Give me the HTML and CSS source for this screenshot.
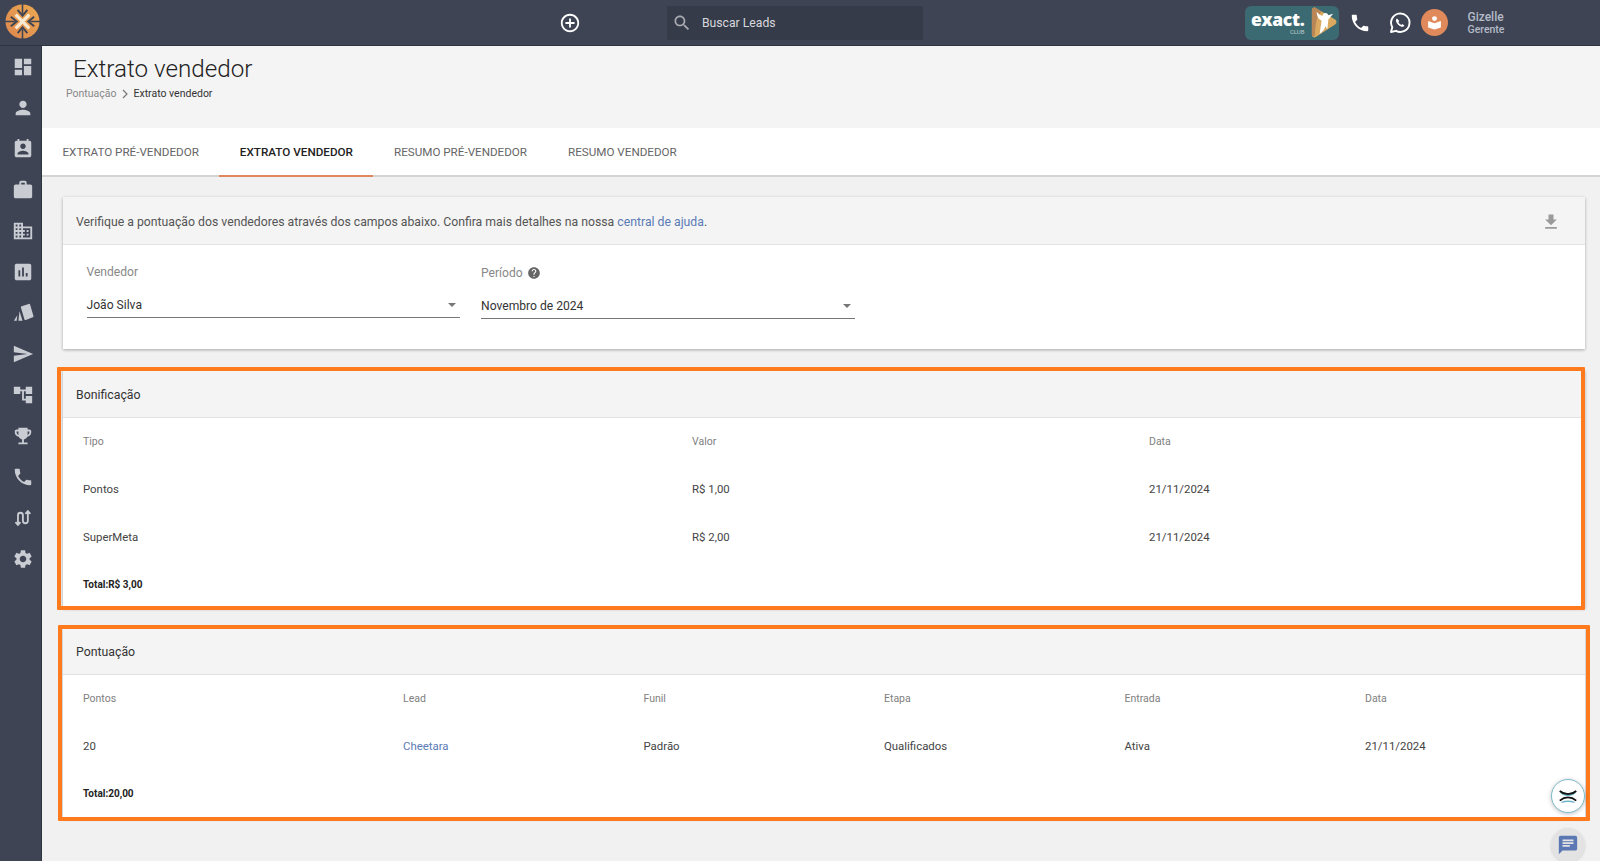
FILE: index.html
```html
<!DOCTYPE html>
<html lang="pt-BR">
<head>
<meta charset="utf-8">
<title>Extrato vendedor</title>
<link rel="stylesheet" href="styles.css">
</head>
<body>
<header class="topbar">
  <div class="logo">
    <svg viewBox="0 0 36 36" width="35" height="35">
      <defs><linearGradient id="lg" x1="0" y1="1" x2="1" y2="0"><stop offset="0" stop-color="#dd8750"/><stop offset="1" stop-color="#eca94f"/></linearGradient></defs>
      <circle cx="18" cy="18" r="17.5" fill="url(#lg)"/>
      <path d="M18 0v10M18 26v10M0 18h10M26 18h10" stroke="#3e4454" stroke-width="1.600"/>
      <path d="M11 11l14 14M25 11L11 25" stroke="#f8ead2" stroke-width="3.200" fill="none"/>
      <path d="M13 6l5 6 5-6M13 30l5-6 5 6M6 13l6 5-6 5M30 13l-6 5 6 5" stroke="#3e4454" stroke-width="2" fill="none"/>
    </svg>
  </div>
  <button class="add-btn" aria-label="Adicionar">
    <svg viewBox="0 0 24 24" width="22" height="22"><path fill="#fff" d="M13 7h-2v4H7v2h4v4h2v-4h4v-2h-4V7zm-1-5C6.480 2 2 6.480 2 12s4.480 10 10 10 10-4.480 10-10S17.520 2 12 2zm0 18c-4.410 0-8-3.590-8-8s3.590-8 8-8 8 3.590 8 8-3.590 8-8 8z"/></svg>
  </button>
  <div class="search">
    <svg viewBox="0 0 24 24" width="20" height="20"><path fill="#a9abb0" d="M15.500 14h-.79l-.28-.27C15.410 12.590 16 11.110 16 9.500 16 5.910 13.090 3 9.500 3S3 5.910 3 9.500 5.910 16 9.500 16c1.610 0 3.090-.59 4.230-1.570l.27.28v.79l5 4.990L20.490 19l-4.990-5zm-6 0C7.010 14 5 11.990 5 9.500S7.010 5 9.500 5 14 7.010 14 9.500 11.990 14 9.500 14z"/></svg>
    <span>Buscar Leads</span>
  </div>
  <div class="club">
    <div class="club-text"><span class="club-name">exact.</span><span class="club-sub">CLUB</span></div>
    <svg viewBox="0 0 30 32" width="29" height="31">
      <path d="M3 3c0-2 2-3 4-2l20 12c2 1 2 4 0 5L7 31c-2 1-4 0-4-2z" fill="#dba95f"/>
      <path d="M3 3c0-2 2-3 4-2l6 4c-4 3-6 8-7 25-2 1-3 0-3-1z" fill="#b98658"/>
      <circle cx="17" cy="9" r="2.800" fill="#fff"/>
      <path d="M8 5c0 5 2 8 5 9l-2 14c3-2 5-5 6-8l2 3 1-10 5-6-7 2h-4C11 9 10 7 8 5z" fill="#fff"/>
    </svg>
  </div>
  <svg class="tb-phone" viewBox="0 0 24 24" width="22" height="22"><path fill="#fff" d="M6.620 10.790c1.440 2.830 3.760 5.140 6.590 6.590l2.200-2.200c.27-.27.67-.36 1.020-.24 1.120.37 2.330.57 3.570.57.55 0 1 .45 1 1V20c0 .55-.45 1-1 1-9.390 0-17-7.610-17-17 0-.55.45-1 1-1h3.500c.55 0 1 .45 1 1 0 1.250.2 2.450.57 3.570.11.35.03.74-.25 1.020l-2.200 2.200z"/></svg>
  <svg class="tb-whats" viewBox="0 0 24 24" width="24" height="24">
    <path d="M3 21l1.300-4.800A9.200 9.200 0 1 1 8 19.800z" fill="none" stroke="#fff" stroke-width="1.900" stroke-linejoin="round"/>
    <path d="M9 7.400c-.9.6-1.300 1.600-.9 3 .8 2.600 2.900 4.600 5.500 5.300 1.300.3 2.300-.2 2.800-1.200l-2.200-1.500-1 .9c-1.300-.6-2.300-1.600-2.800-2.900l.9-1z" fill="#fff"/>
  </svg>
  <div class="book">
    <svg viewBox="0 0 24 24" width="17" height="17"><circle cx="12" cy="6.500" r="3.500" fill="#fff"/><path d="M3 10l9 3 9-3v9l-9 3-9-3z" fill="#fff"/></svg>
  </div>
  <div class="user"><span class="user-name">Gizelle</span><span class="user-role">Gerente</span></div>
</header>

<div class="shell">
  <nav class="sidebar">
    <svg viewBox="0 0 24 24"><path d="M3 13h8V3H3v10zm0 8h8v-6H3v6zm10 0h8V11h-8v10zm0-18v6h8V3h-8z"/></svg>
    <svg viewBox="0 0 24 24"><path d="M12 12c2.210 0 4-1.790 4-4s-1.790-4-4-4-4 1.790-4 4 1.790 4 4 4zm0 2c-2.670 0-8 1.340-8 4v2h16v-2c0-2.660-5.330-4-8-4z"/></svg>
    <svg viewBox="0 0 24 24"><path d="M19 3h-1V1h-2v2H8V1H6v2H5c-1.110 0-2 .9-2 2v14c0 1.100.89 2 2 2h14c1.100 0 2-.9 2-2V5c0-1.100-.9-2-2-2zm-7 3c1.660 0 3 1.340 3 3s-1.340 3-3 3-3-1.340-3-3 1.340-3 3-3zm6 12H6v-1c0-2 4-3.100 6-3.100s6 1.100 6 3.100v1z"/></svg>
    <svg viewBox="0 0 24 24"><path d="M20 6h-4V4c0-1.110-.89-2-2-2h-4c-1.110 0-2 .89-2 2v2H4c-1.110 0-1.990.89-1.990 2L2 19c0 1.110.89 2 2 2h16c1.110 0 2-.89 2-2V8c0-1.110-.89-2-2-2zm-6 0h-4V4h4v2z"/></svg>
    <svg viewBox="0 0 24 24"><path d="M12 7V3H2v18h20V7H12zM6 19H4v-2h2v2zm0-4H4v-2h2v2zm0-4H4V9h2v2zm0-4H4V5h2v2zm4 12H8v-2h2v2zm0-4H8v-2h2v2zm0-4H8V9h2v2zm0-4H8V5h2v2zm10 12h-8v-2h2v-2h-2v-2h2v-2h-2V9h8v10zm-2-8h-2v2h2v-2zm0 4h-2v2h2v-2z"/></svg>
    <svg viewBox="0 0 24 24"><path d="M19 3H5c-1.100 0-2 .9-2 2v14c0 1.100.9 2 2 2h14c1.100 0 2-.9 2-2V5c0-1.100-.9-2-2-2zM9 17H7v-7h2v7zm4 0h-2V7h2v10zm4 0h-2v-4h2v4z"/></svg>
    <svg viewBox="0 0 24 24"><path d="M10.500 4.700l7.800-2.600c.6-.2 1.200.1 1.400.7l3.700 12.400c.2.6-.1 1.200-.7 1.400l-7.600 3c-.6.2-1.200 0-1.500-.6L9.800 6.200c-.2-.6.100-1.300.7-1.500z"/><path d="M8.200 10l3.300 10.500H7zM5.800 14.500l-.7 6H2z"/></svg>
    <svg viewBox="0 0 24 24"><path d="M2.010 21L23 12 2.010 3 2 10l15 2-15 2z"/></svg>
    <svg viewBox="0 0 24 24"><path d="M22 11V3h-7v3H9V3H2v8h7V8h2v10h4v3h7v-8h-7v3h-2V8h2v3z"/></svg>
    <svg viewBox="0 0 24 24"><path d="M19 5h-2V3H7v2H5c-1.100 0-2 .9-2 2v1c0 2.550 1.920 4.630 4.390 4.940.63 1.500 1.980 2.630 3.610 2.960V19H7v2h10v-2h-4v-3.100c1.630-.33 2.980-1.460 3.610-2.960C19.080 12.630 21 10.550 21 8V7c0-1.100-.9-2-2-2zM5 8V7h2v3.820C5.840 10.400 5 9.300 5 8zm14 0c0 1.300-.84 2.400-2 2.820V7h2v1z"/></svg>
    <svg viewBox="0 0 24 24"><path d="M6.620 10.790c1.440 2.830 3.760 5.140 6.590 6.590l2.200-2.200c.27-.27.67-.36 1.020-.24 1.120.37 2.330.57 3.570.57.55 0 1 .45 1 1V20c0 .55-.45 1-1 1-9.390 0-17-7.610-17-17 0-.55.45-1 1-1h3.500c.55 0 1 .45 1 1 0 1.250.2 2.450.57 3.570.11.35.03.74-.25 1.020l-2.200 2.200z"/></svg>
    <svg viewBox="0 0 24 24" class="route"><path d="M6.500 19V9a2.700 2.700 0 0 1 5.400 0v6a2.700 2.700 0 0 0 5.400 0V5M3.800 16.500l2.700 3 2.700-3M14.600 7.500l2.700-3 2.700 3"/></svg>
    <svg viewBox="0 0 24 24"><path d="M19.140 12.940c.04-.3.06-.61.06-.94 0-.32-.02-.64-.07-.94l2.030-1.580c.18-.14.23-.41.12-.61l-1.920-3.320c-.12-.22-.37-.29-.59-.22l-2.390.96c-.5-.38-1.030-.7-1.620-.94l-.36-2.540c-.04-.24-.24-.41-.48-.41h-3.840c-.24 0-.43.17-.47.41l-.36 2.540c-.59.24-1.130.57-1.620.94l-2.390-.96c-.22-.08-.47 0-.59.22L2.740 8.870c-.12.21-.08.47.12.61l2.030 1.580c-.05.3-.09.63-.09.94s.02.64.07.94l-2.030 1.580c-.18.14-.23.41-.12.61l1.920 3.320c.12.22.37.29.59.22l2.390-.96c.5.38 1.030.7 1.620.94l.36 2.540c.05.24.24.41.48.41h3.840c.24 0 .44-.17.47-.41l.36-2.540c.59-.24 1.130-.56 1.620-.94l2.390.96c.22.08.47 0 .59-.22l1.920-3.320c.12-.22.07-.47-.12-.61l-2.010-1.580zM12 15.600c-1.980 0-3.600-1.620-3.600-3.600s1.620-3.600 3.600-3.600 3.600 1.620 3.600 3.600-1.620 3.600-3.600 3.600z"/></svg>
  </nav>

  <main class="main">
    <section class="page-head">
      <h1>Extrato vendedor</h1>
      <div class="crumbs">
        <span class="crumb-parent">Pontuação</span>
        <svg viewBox="0 0 8 10" width="8" height="10"><path d="M2 1l4 4-4 4" fill="none" stroke="#777" stroke-width="1.200"/></svg>
        <span class="crumb-current">Extrato vendedor</span>
      </div>
    </section>

    <div class="tabs">
      <a class="tab">Extrato pré-vendedor</a>
      <a class="tab active">Extrato vendedor</a>
      <a class="tab">Resumo pré-vendedor</a>
      <a class="tab">Resumo vendedor</a>
    </div>

    <div class="content">
      <section class="card">
        <div class="card-head">
          <p>Verifique a pontuação dos vendedores através dos campos abaixo. Confira mais detalhes na nossa <a class="link">central de ajuda</a>.</p>
          <svg class="download" viewBox="0 0 24 24" width="20" height="20"><path fill="#9a9a9a" d="M19 9h-4V3H9v6H5l7 7 7-7zM5 18v2h14v-2H5z"/></svg>
        </div>
        <div class="filters">
          <div class="field">
            <label>Vendedor</label>
            <div class="select"><span>João Silva</span><i class="caret"></i></div>
          </div>
          <div class="field field-period">
            <label>Período
              <svg viewBox="0 0 24 24" width="14" height="14"><path fill="#666" d="M12 2C6.480 2 2 6.480 2 12s4.480 10 10 10 10-4.480 10-10S17.520 2 12 2zm1 17h-2v-2h2v2zm2.070-7.750l-.9.92C13.450 12.900 13 13.500 13 15h-2v-.5c0-1.100.45-2.100 1.170-2.830l1.240-1.260c.37-.36.59-.86.59-1.410 0-1.100-.9-2-2-2s-2 .9-2 2H8c0-2.210 1.790-4 4-4s4 1.790 4 4c0 .88-.36 1.680-.93 2.250z"/></svg>
            </label>
            <div class="select"><span>Novembro de 2024</span><i class="caret"></i></div>
          </div>
        </div>
      </section>

      <section class="card card-bonus">
        <div class="card-head"><h2>Bonificação</h2></div>
        <div class="grid grid-bonus">
          <div class="th">Tipo</div><div class="th">Valor</div><div class="th">Data</div>
          <div>Pontos</div><div>R$ 1,00</div><div>21/11/2024</div>
          <div>SuperMeta</div><div>R$ 2,00</div><div>21/11/2024</div>
          <div class="total">Total:R$ 3,00</div>
        </div>
      </section>

      <section class="card card-points">
        <div class="card-head"><h2>Pontuação</h2></div>
        <div class="grid grid-points">
          <div class="th">Pontos</div><div class="th">Lead</div><div class="th">Funil</div><div class="th">Etapa</div><div class="th">Entrada</div><div class="th">Data</div>
          <div>20</div><div><a class="link-lead">Cheetara</a></div><div>Padrão</div><div>Qualificados</div><div>Ativa</div><div>21/11/2024</div>
          <div class="total">Total:20,00</div>
        </div>
      </section>
    </div>
  </main>
</div>

<div class="mark mark-a"></div>
<div class="mark mark-b"></div>

<button class="fab fab-widget" aria-label="Widget">
  <svg viewBox="0 0 24 24" width="22" height="22">
    <path d="M3 7c4 2.500 14 2.500 18 0-1 3-4 5-9 5S4 10 3 7z" fill="#6db7c8"/>
    <path d="M3 6.500c3 2.500 6 3.500 9 3.500s6-1 9-3.500" fill="none" stroke="#111" stroke-width="2"/>
    <path d="M3 17c3-2.500 6-3.500 9-3.500s6 1 9 3.500" fill="none" stroke="#111" stroke-width="2"/>
    <path d="M5 19c4-1.500 10-1.500 14 0" fill="none" stroke="#6db7c8" stroke-width="1.500"/>
  </svg>
</button>
<button class="fab fab-chat" aria-label="Chat">
  <svg viewBox="0 0 24 24" width="22" height="22"><path fill="#5c78b4" d="M20 2H4c-1.100 0-1.990.9-1.990 2L2 22l4-4h14c1.100 0 2-.9 2-2V4c0-1.100-.9-2-2-2zM6 9h12v2H6V9zm8 5H6v-2h8v2zm4-6H6V6h12v2z"/></svg>
</button>
</body>
</html>
```
FILE: styles.css
```css
* { box-sizing: border-box; }
html, body { margin: 0; height: 861px; overflow: hidden; }
body { font-family: Roboto, "Liberation Sans", sans-serif; background: #f1f1f1; color: #333; position: relative; }

.topbar { height: 46px; background: #3e4454; display: flex; align-items: center; border-bottom: 1px solid #2f3441; }
.logo { width: 45px; padding-left: 5px; display: flex; align-items: center; height: 35px; margin-bottom: 3px; }
.add-btn { margin-left: 514px; width: 22px; height: 22px; padding: 0; border: 0; background: none; display: block; }
.search { margin-left: 86px; width: 256px; height: 34px; background: #363b49; display: flex; align-items: center; padding-left: 5px; gap: 10px; color: #d6d8dd; font-size: 12.200px; }
.club { margin-left: 322px; width: 94px; height: 34px; border-radius: 6px; background: #3c6a72; display: flex; align-items: center; justify-content: space-between; padding: 0 1px 0 6px; }
.club-text { display: flex; flex-direction: column; align-items: flex-end; line-height: 1; }
.club-name { font-family: "Open Sans", sans-serif; font-weight: 800; font-size: 17.500px; color: #fff; line-height: 18px; letter-spacing: -.3px; }
.club-sub { font-size: 6px; color: #b9cdd0; line-height: 7px; }
.tb-phone { margin-left: 10px; }
.tb-whats { margin-left: 17px; }
.book { margin-left: 9px; width: 27px; height: 27px; border-radius: 50%; background: #e08a5b; display: flex; align-items: center; justify-content: center; }
.user { margin-left: 19.500px; display: flex; flex-direction: column; font-weight: 500; color: #b4bac7; }
.user-name { font-size: 12px; line-height: 14px; }
.user-role { font-size: 10.500px; line-height: 12px; }

.shell { display: flex; height: 815px; }
.sidebar { width: 42px; background: #3e4454; display: flex; flex-direction: column; align-items: center; gap: 19px; padding: 10px 0 0 4px; border-right: 1px solid #2f3441; flex: none; }
.sidebar svg { width: 22px; height: 22px; fill: #c9ccd2; flex: none; }
.sidebar .route { fill: none; stroke: #c9ccd2; stroke-width: 2; }

.main { flex: 1; min-width: 0; }
.page-head { height: 82px; background: #f4f4f4; padding: 9px 0 0 24px; }
.page-head h1 { margin: 0 0 0 7px; font-size: 24.200px; font-weight: 300; line-height: 28px; color: #222; }
.crumbs { display: flex; align-items: center; gap: 4.500px; font-size: 10.500px; line-height: 14px; margin-top: 4px; }
.crumb-parent { color: #888; }
.crumb-current { color: #333; }

.tabs { height: 49px; background: #fff; display: flex; border-bottom: 2px solid #d4d4d4; }
.tab { padding: 0 20.500px; height: 49px; line-height: 49px; font-size: 11.650px; font-weight: 400; text-transform: uppercase; color: #666; }
.tab.active { color: #222; font-weight: 500; border-bottom: 2px solid #e0875f; font-size: 11.700px; }

.content { padding: 20px 15px 0 21px; display: flex; flex-direction: column; gap: 20px; }
.card { background: #fff; box-shadow: 0 1px 3px rgba(0, 0, 0, .3); }
.card-bonus { margin-top: 1px; }
.card-head { height: 48px; background: #f4f4f4; border-bottom: 1px solid #e2e2e2; display: flex; align-items: center; justify-content: space-between; padding: 2px 24px 0 13px; font-size: 12.250px; color: #555; }
.card-points .card-head { height: 47px; }
.card-head p { margin: 0; }
.card-head h2 { margin: 0; font-size: 12.300px; font-weight: 400; color: #333; }
.link { color: #5b7bb5; }
.filters { height: 104px; display: flex; padding: 19px 0 0 23.500px; gap: 21px; }
.field { width: 373.500px; font-size: 12.100px; }
.field label { display: flex; align-items: center; gap: 4px; height: 16px; color: #888; }
.field-period { margin-top: 1px; }
.select { margin-top: 16.500px; height: 21.500px; border-bottom: 1px solid #777; display: flex; align-items: flex-start; justify-content: space-between; color: #333; padding-right: 4px; line-height: 16px; }
.caret { margin-top: 6px; border: 4px solid transparent; border-top-color: #777; border-bottom: 0; }

.grid { display: grid; grid-auto-rows: 47.500px; align-items: center; padding-left: 20px; font-size: 11.400px; color: #444; }
.grid-bonus { grid-template-columns: 609px 457px 1fr; }
.grid-points { grid-template-columns: 320px repeat(5, 240.500px); }
.th { font-size: 10.500px; color: #808080; }
.total { grid-column: 1 / -1; font-size: 10px; font-weight: 700; color: #222; }
.link-lead { color: #5b7bb5; }

.mark { position: absolute; border: 4px solid #ff7a1c; border-radius: 1px; pointer-events: none; }
.mark-a { left: 57px; top: 367px; width: 1528px; height: 243px; }
.mark-b { left: 58px; top: 625px; width: 1532px; height: 196px; }

.fab { position: absolute; left: 1551px; width: 34px; height: 34px; border-radius: 50%; padding: 0; display: flex; align-items: center; justify-content: center; }
.fab-widget { top: 779px; background: #fff; border: 1px solid #7dbccb; box-shadow: 0 1px 4px rgba(0, 0, 0, .25); }
.fab-chat { top: 828px; background: #e3e3e3; border: 0; box-shadow: 0 1px 3px rgba(0, 0, 0, .12); }
```
